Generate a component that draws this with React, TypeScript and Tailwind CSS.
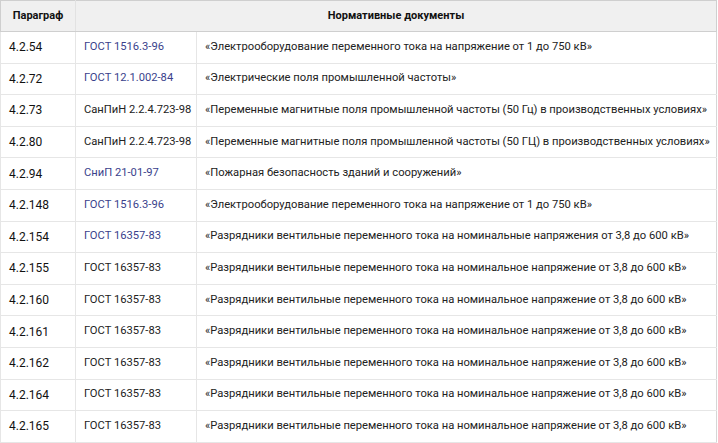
import React from "react";

type Row = { p: string; code: string; link?: boolean; doc: string };

const rows: Row[] = [
  { p: "4.2.54", code: "ГОСТ 1516.3-96", link: true, doc: "Электрооборудование переменного тока на напряжение от 1 до 750 кВ" },
  { p: "4.2.72", code: "ГОСТ 12.1.002-84", link: true, doc: "Электрические поля промышленной частоты" },
  { p: "4.2.73", code: "СанПиН 2.2.4.723-98", doc: "Переменные магнитные поля промышленной частоты (50 Гц) в производственных условиях" },
  { p: "4.2.80", code: "СанПиН 2.2.4.723-98", doc: "Переменные магнитные поля промышленной частоты (50 ГЦ) в производственных условиях" },
  { p: "4.2.94", code: "СниП 21-01-97", link: true, doc: "Пожарная безопасность зданий и сооружений" },
  { p: "4.2.148", code: "ГОСТ 1516.3-96", link: true, doc: "Электрооборудование переменного тока на напряжение от 1 до 750 кВ" },
  { p: "4.2.154", code: "ГОСТ 16357-83", link: true, doc: "Разрядники вентильные переменного тока на номинальные напряжения от 3,8 до 600 кВ" },
  { p: "4.2.155", code: "ГОСТ 16357-83", doc: "Разрядники вентильные переменного тока на номинальное напряжение от 3,8 до 600 кВ" },
  { p: "4.2.160", code: "ГОСТ 16357-83", doc: "Разрядники вентильные переменного тока на номинальное напряжение от 3,8 до 600 кВ" },
  { p: "4.2.161", code: "ГОСТ 16357-83", doc: "Разрядники вентильные переменного тока на номинальное напряжение от 3,8 до 600 кВ" },
  { p: "4.2.162", code: "ГОСТ 16357-83", doc: "Разрядники вентильные переменного тока на номинальное напряжение от 3,8 до 600 кВ" },
  { p: "4.2.164", code: "ГОСТ 16357-83", doc: "Разрядники вентильные переменного тока на номинальное напряжение от 3,8 до 600 кВ" },
  { p: "4.2.165", code: "ГОСТ 16357-83", doc: "Разрядники вентильные переменного тока на номинальное напряжение от 3,8 до 600 кВ" },
];

export default function App() {
  return (
    <div className="w-[718px] h-[443px] bg-white overflow-hidden font-['Roboto',_'Liberation_Sans',_sans-serif] text-[11.2px]">
      <table className="w-[717px] border-collapse table-fixed">
        <colgroup>
          <col className="w-[75px]" />
          <col className="w-[121px]" />
          <col />
        </colgroup>
        <thead>
          {/* Header */}
          <tr className="h-[31px] bg-[#f0f0f0]">
            <th className="border border-[#cfcfcf] border-r-[#e2e2e2] text-[11px] font-bold text-[#111] text-center align-middle">
              Параграф
            </th>
            <th colSpan={2} className="border border-[#cfcfcf] text-[11px] font-bold text-[#111] text-center align-middle">
              Нормативные документы
            </th>
          </tr>
        </thead>
        <tbody>
          {rows.map((r, i) => (
            <tr key={i} className="h-[31.6px]">
              <td className="border border-[#e6e6e6] border-t-0 pl-2 text-[12px] text-[#111] align-middle">{r.p}</td>
              <td className={`border border-[#e6e6e6] border-t-0 pl-2 align-middle whitespace-nowrap ${r.link ? "text-[#3a3f8c]" : "text-[#222]"}`}>
                {r.code}
              </td>
              <td className="border border-[#e6e6e6] border-t-0 border-r-[#d6d6d6] pl-2 text-[#222] align-middle whitespace-nowrap">
                «{r.doc}»
              </td>
            </tr>
          ))}
        </tbody>
      </table>
    </div>
  );
}
